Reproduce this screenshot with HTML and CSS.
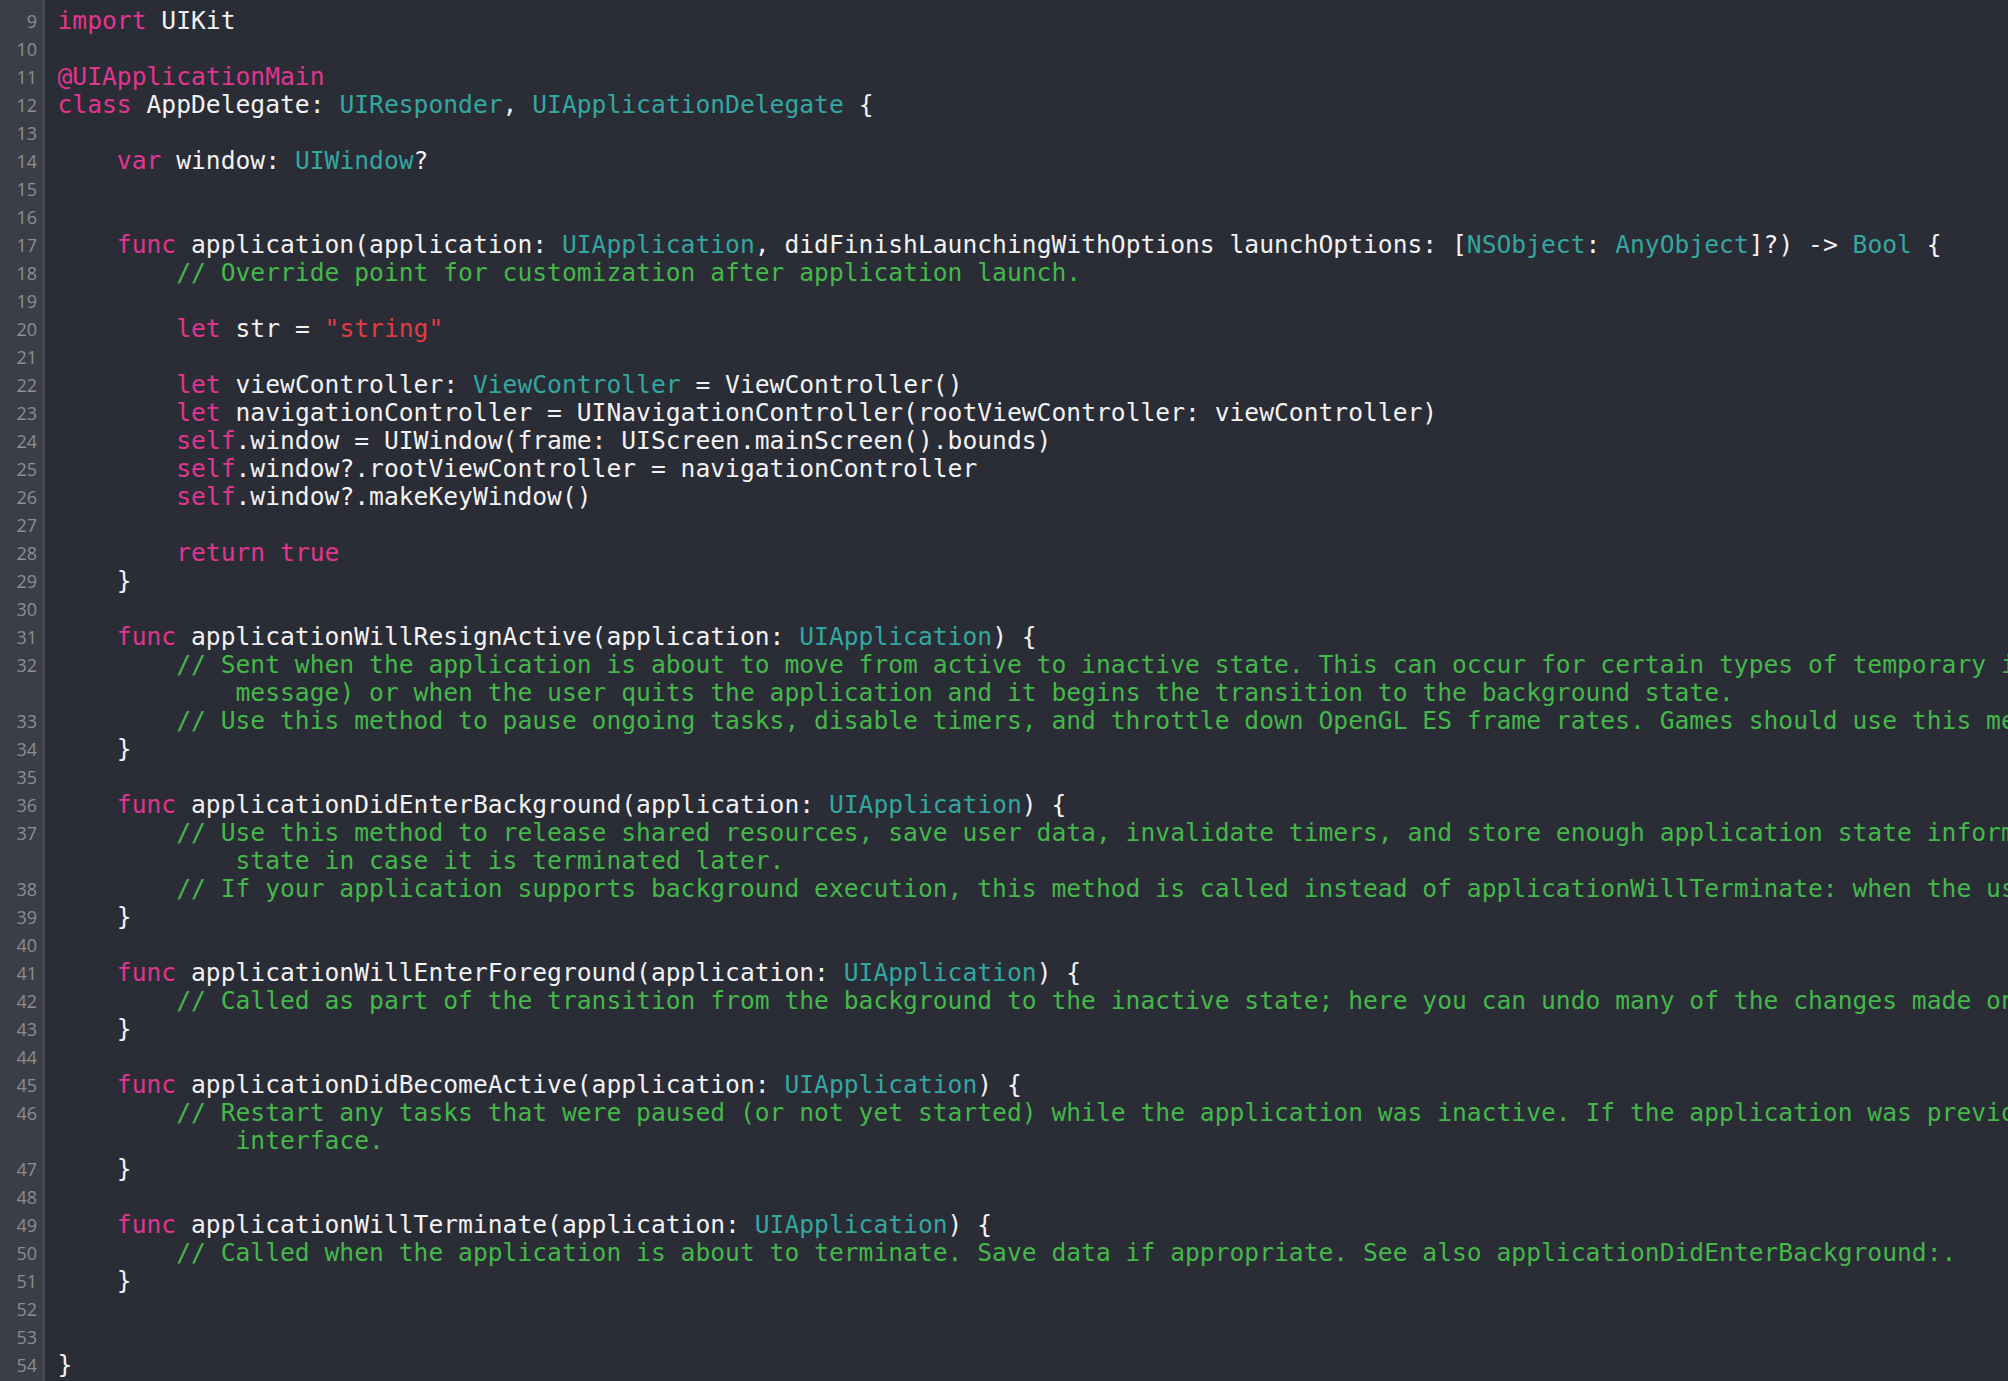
FILE: index.html
```html
<!DOCTYPE html>
<html lang="en">
<head>
<meta charset="utf-8">
<title>AppDelegate.swift</title>
<link rel="stylesheet" href="styles.css">
</head>
<body>
<div class="editor">
  <div class="gutter">
    <div class="num">9</div>
    <div class="num">10</div>
    <div class="num">11</div>
    <div class="num">12</div>
    <div class="num">13</div>
    <div class="num">14</div>
    <div class="num">15</div>
    <div class="num">16</div>
    <div class="num">17</div>
    <div class="num">18</div>
    <div class="num">19</div>
    <div class="num">20</div>
    <div class="num">21</div>
    <div class="num">22</div>
    <div class="num">23</div>
    <div class="num">24</div>
    <div class="num">25</div>
    <div class="num">26</div>
    <div class="num">27</div>
    <div class="num">28</div>
    <div class="num">29</div>
    <div class="num">30</div>
    <div class="num">31</div>
    <div class="num">32</div>
    <div class="num"></div>
    <div class="num">33</div>
    <div class="num">34</div>
    <div class="num">35</div>
    <div class="num">36</div>
    <div class="num">37</div>
    <div class="num"></div>
    <div class="num">38</div>
    <div class="num">39</div>
    <div class="num">40</div>
    <div class="num">41</div>
    <div class="num">42</div>
    <div class="num">43</div>
    <div class="num">44</div>
    <div class="num">45</div>
    <div class="num">46</div>
    <div class="num"></div>
    <div class="num">47</div>
    <div class="num">48</div>
    <div class="num">49</div>
    <div class="num">50</div>
    <div class="num">51</div>
    <div class="num">52</div>
    <div class="num">53</div>
    <div class="num">54</div>
  </div>
  <div class="code">
<div class="ln"><span class="k">import</span> UIKit</div>
<div class="ln"> </div>
<div class="ln"><span class="k">@UIApplicationMain</span></div>
<div class="ln"><span class="k">class</span> AppDelegate: <span class="t">UIResponder</span>, <span class="t">UIApplicationDelegate</span> {</div>
<div class="ln"> </div>
<div class="ln">    <span class="k">var</span> window: <span class="t">UIWindow</span>?</div>
<div class="ln"> </div>
<div class="ln"> </div>
<div class="ln">    <span class="k">func</span> application(application: <span class="t">UIApplication</span>, didFinishLaunchingWithOptions launchOptions: [<span class="t">NSObject</span>: <span class="t">AnyObject</span>]?) -&gt; <span class="t">Bool</span> {</div>
<div class="ln">        <span class="c">// Override point for customization after application launch.</span></div>
<div class="ln"> </div>
<div class="ln">        <span class="k">let</span> str = <span class="s">"string"</span></div>
<div class="ln"> </div>
<div class="ln">        <span class="k">let</span> viewController: <span class="t">ViewController</span> = ViewController()</div>
<div class="ln">        <span class="k">let</span> navigationController = UINavigationController(rootViewController: viewController)</div>
<div class="ln">        <span class="k">self</span>.window = UIWindow(frame: UIScreen.mainScreen().bounds)</div>
<div class="ln">        <span class="k">self</span>.window?.rootViewController = navigationController</div>
<div class="ln">        <span class="k">self</span>.window?.makeKeyWindow()</div>
<div class="ln"> </div>
<div class="ln">        <span class="k">return</span> <span class="k">true</span></div>
<div class="ln">    }</div>
<div class="ln"> </div>
<div class="ln">    <span class="k">func</span> applicationWillResignActive(application: <span class="t">UIApplication</span>) {</div>
<div class="ln">        <span class="c">// Sent when the application is about to move from active to inactive state. This can occur for certain types of temporary interruptions (such as an incoming phone call or SMS</span></div>
<div class="ln">            <span class="c">message) or when the user quits the application and it begins the transition to the background state.</span></div>
<div class="ln">        <span class="c">// Use this method to pause ongoing tasks, disable timers, and throttle down OpenGL ES frame rates. Games should use this method to pause the game.</span></div>
<div class="ln">    }</div>
<div class="ln"> </div>
<div class="ln">    <span class="k">func</span> applicationDidEnterBackground(application: <span class="t">UIApplication</span>) {</div>
<div class="ln">        <span class="c">// Use this method to release shared resources, save user data, invalidate timers, and store enough application state information to restore your application to its current</span></div>
<div class="ln">            <span class="c">state in case it is terminated later.</span></div>
<div class="ln">        <span class="c">// If your application supports background execution, this method is called instead of applicationWillTerminate: when the user quits.</span></div>
<div class="ln">    }</div>
<div class="ln"> </div>
<div class="ln">    <span class="k">func</span> applicationWillEnterForeground(application: <span class="t">UIApplication</span>) {</div>
<div class="ln">        <span class="c">// Called as part of the transition from the background to the inactive state; here you can undo many of the changes made on entering the background.</span></div>
<div class="ln">    }</div>
<div class="ln"> </div>
<div class="ln">    <span class="k">func</span> applicationDidBecomeActive(application: <span class="t">UIApplication</span>) {</div>
<div class="ln">        <span class="c">// Restart any tasks that were paused (or not yet started) while the application was inactive. If the application was previously in the background, optionally refresh the user</span></div>
<div class="ln">            <span class="c">interface.</span></div>
<div class="ln">    }</div>
<div class="ln"> </div>
<div class="ln">    <span class="k">func</span> applicationWillTerminate(application: <span class="t">UIApplication</span>) {</div>
<div class="ln">        <span class="c">// Called when the application is about to terminate. Save data if appropriate. See also applicationDidEnterBackground:.</span></div>
<div class="ln">    }</div>
<div class="ln"> </div>
<div class="ln"> </div>
<div class="ln">}</div>
  </div>
</div>
</body>
</html>
```

FILE: styles.css
```css
html, body {
  margin: 0;
  padding: 0;
  background: #2a2c36;
  overflow: hidden;
}

.editor {
  display: flex;
  min-height: 100vh;
  background: #2a2c36;
}

.gutter {
  flex: 0 0 42px;
  width: 42px;
  background: #3c3e47;
  border-right: 3px solid #474952;
  padding-top: 7px;
  box-sizing: content-box;
}

.num {
  height: 28px;
  line-height: 28px;
  text-align: right;
  padding-right: 5px;
  font-family: "Open Sans", Roboto, sans-serif;
  font-size: 18px;
  font-weight: 500;
  color: #8b8d92;
}

.code {
  flex: 1 1 auto;
  min-width: 0;
  overflow: hidden;
  padding-top: 7px;
  padding-left: 12.5px;
  font-family: "DejaVu Sans Mono", "Liberation Mono", monospace;
  font-size: 24.65px;
  color: #f2f2f2;
}

.ln {
  height: 28px;
  line-height: 28px;
  white-space: pre;
  overflow: hidden;
}

.k { color: #e0368f; }
.t { color: #33a7a0; }
.c { color: #45b84a; }
.s { color: #e33b42; }
```
